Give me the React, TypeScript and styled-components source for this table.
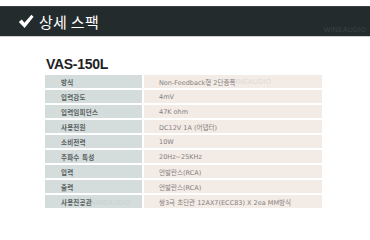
import React from "react";
import styled, { createGlobalStyle } from "styled-components";

const specs: { label: string; value: string }[] = [
  { label: "방식", value: "Non-Feedback형 2단증폭" },
  { label: "입력감도", value: "4mV" },
  { label: "입력임피던스", value: "47K ohm" },
  { label: "사용전원", value: "DC12V 1A (어댑터)" },
  { label: "소비전력", value: "10W" },
  { label: "주파수 특성", value: "20Hz~25KHz" },
  { label: "입력", value: "언발란스(RCA)" },
  { label: "출력", value: "언발란스(RCA)" },
  { label: "사용진공관", value: "쌍3극 초단관 12AX7(ECC83) X 2ea MM방식" },
];

const GlobalStyle = createGlobalStyle`
  html, body {
    margin: 0;
    padding: 0;
    background: #ffffff;
  }
  body {
    font-family: "Noto Sans CJK KR", "Noto Sans", sans-serif;
  }
`;

const Page = styled.div`
  width: 370px;
  height: 240px;
  padding-top: 6px;
  box-sizing: border-box;
  overflow: hidden;
`;

const Header = styled.div`
  height: 29px;
  background: #232b2c;
  border-top: 1px solid #3a4244;
  border-bottom: 1px solid #cfcfcf;
  display: flex;
  align-items: center;
  padding: 0 4px 0 18px;
  gap: 5px;
`;

const HeaderTitle = styled.h2`
  margin: 0;
  font-family: "Noto Sans CJK KR", sans-serif;
  font-size: 15px;
  font-weight: 400;
  color: #ffffff;
  line-height: 1;
  letter-spacing: 0.3px;
`;

const HeaderMark = styled.span`
  margin-left: auto;
  align-self: flex-end;
  margin-bottom: 3px;
  font-family: "Liberation Sans", sans-serif;
  font-size: 7px;
  letter-spacing: 0.2px;
  color: #3b4344;
`;

const Watermark = styled.span`
  position: absolute;
  font-family: "Liberation Sans", sans-serif;
  font-size: 7px;
  letter-spacing: 0.2px;
  color: rgba(190, 190, 190, 0.45);
  pointer-events: none;
`;

const Content = styled.div`
  padding: 19px 0 0 45px;
`;

const Model = styled.h1`
  margin: 0 0 3px 1px;
  font-family: "Liberation Sans", Arial, sans-serif;
  font-size: 14px;
  font-weight: 700;
  letter-spacing: -0.3px;
  color: #1e2224;
  line-height: 16px;
`;

const Table = styled.div`
  position: relative;
  width: 277px;
  display: grid;
  grid-template-columns: 97px 1fr;
  column-gap: 2px;
  row-gap: 2px;
`;

const Cell = styled.div`
  height: 13px;
  display: flex;
  align-items: center;
  white-space: nowrap;
  font-family: "DejaVu Sans", "Noto Sans CJK KR", sans-serif;
  font-size: 6.5px;
`;

const LabelCell = styled(Cell)`
  background: #d4dcdc;
  padding-left: 16px;
  font-weight: 700;
  color: #59605f;
  letter-spacing: 0.2px;
`;

const ValueCell = styled(Cell)`
  background: #f3ebe6;
  padding-left: 15px;
  color: #858080;
`;

const CheckIcon = () => (
  <svg width="16" height="15" viewBox="0 0 16 15">
    <path
      d="M0.8 8 L3.8 5.6 L6.4 8.8 L13.4 0.8 L15.6 2.8 L6.6 14 Z"
      fill="#ffffff"
    />
  </svg>
);

export default function App() {
  return (
    <Page>
      <GlobalStyle />
      <Header>
        <CheckIcon />
        <HeaderTitle>상세 스팩</HeaderTitle>
        <HeaderMark>WINEAUDIO</HeaderMark>
      </Header>
      <Content>
        <Model>VAS-150L</Model>
        <Table>
          {specs.map((s) => (
            <React.Fragment key={s.label}>
              <LabelCell>{s.label}</LabelCell>
              <ValueCell>{s.value}</ValueCell>
            </React.Fragment>
          ))}
          <Watermark style={{ left: 184, top: 3 }}>WINEAUDIO</Watermark>
          <Watermark style={{ left: 44, top: 124 }}>WINEAUDIO</Watermark>
        </Table>
      </Content>
    </Page>
  );
}
